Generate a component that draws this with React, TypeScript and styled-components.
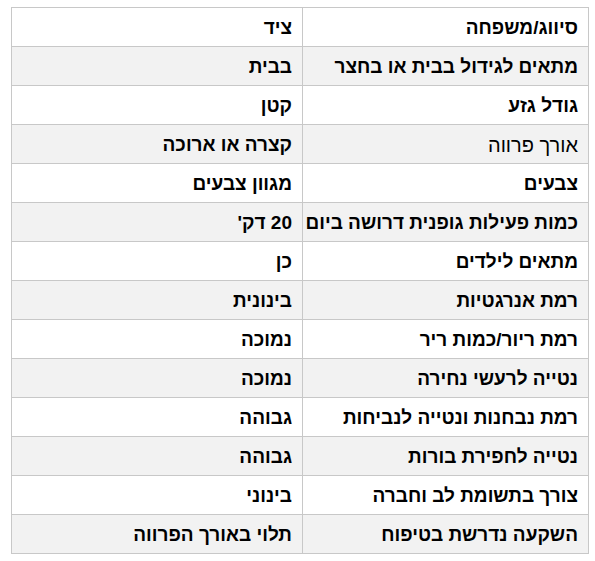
import React from "react";
import styled, { createGlobalStyle } from "styled-components";

const GlobalStyle = createGlobalStyle`
  body {
    margin: 0;
    background: #ffffff;
    font-family: "Liberation Sans", Arial, sans-serif;
  }
`;

interface Row {
  label: string;
  value: string;
  plain?: boolean;
}

const rows: Row[] = [
  { label: "סיווג/משפחה", value: "ציד" },
  { label: "מתאים לגידול בבית או בחצר", value: "בבית" },
  { label: "גודל גזע", value: "קטן" },
  { label: "אורך פרווה", value: "קצרה או ארוכה", plain: true },
  { label: "צבעים", value: "מגוון צבעים" },
  { label: "כמות פעילות גופנית דרושה ביום", value: "20 דק'" },
  { label: "מתאים לילדים", value: "כן" },
  { label: "רמת אנרגטיות", value: "בינונית" },
  { label: "רמת ריור/כמות ריר", value: "נמוכה" },
  { label: "נטייה לרעשי נחירה", value: "נמוכה" },
  { label: "רמת נבחנות ונטייה לנביחות", value: "גבוהה" },
  { label: "נטייה לחפירת בורות", value: "גבוהה" },
  { label: "צורך בתשומת לב וחברה", value: "בינוני" },
  { label: "השקעה נדרשת בטיפוח", value: "תלוי באורך הפרווה" },
];

const Wrapper = styled.div`
  padding: 7px 0 0 11px;
`;

const Table = styled.table`
  direction: rtl;
  width: 577px;
  border-collapse: collapse;
  table-layout: fixed;
  font-size: 19px;
  color: #000;
`;

const Tr = styled.tr<{ $shaded: boolean }>`
  height: 39px;
  background: ${(p) => (p.$shaded ? "#f2f2f2" : "#ffffff")};
`;

const Td = styled.td<{ $plain?: boolean }>`
  border: 1px solid #c8c8c8;
  padding: 2px 10px 0;
  text-align: right;
  vertical-align: middle;
  font-weight: ${(p) => (p.$plain ? 400 : 700)};
  font-size: ${(p) => (p.$plain ? "20px" : "inherit")};
  white-space: nowrap;
  overflow: hidden;
`;

const App = () => {
  return (
    <Wrapper>
      <GlobalStyle />
      <Table>
        <colgroup>
          <col style={{ width: 286 }} />
          <col style={{ width: 291 }} />
        </colgroup>
        <tbody>
          {rows.map((r, i) => (
            <Tr key={r.label} $shaded={i % 2 === 1}>
              <Td $plain={r.plain}>{r.label}</Td>
              <Td>{r.value}</Td>
            </Tr>
          ))}
        </tbody>
      </Table>
    </Wrapper>
  );
};

export default App;
